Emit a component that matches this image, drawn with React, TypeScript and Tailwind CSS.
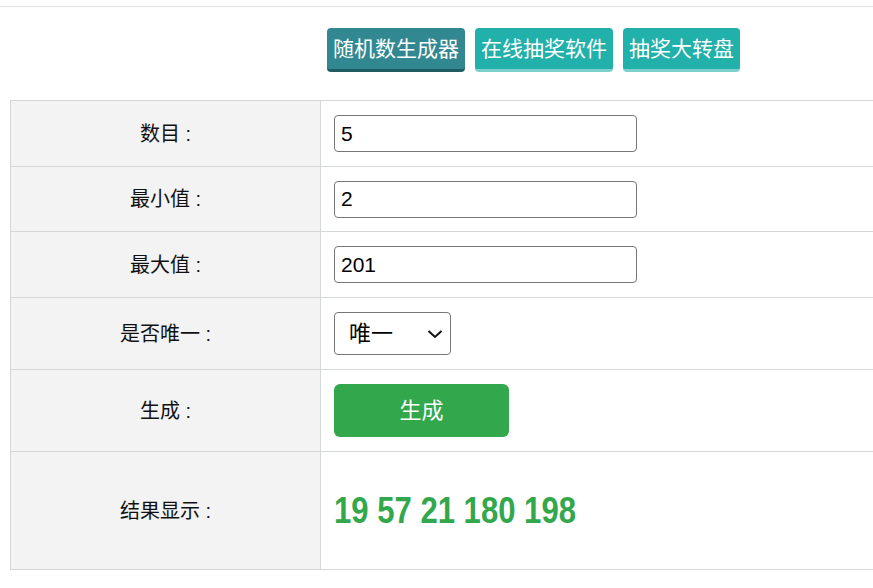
import { useState } from 'react'

const font = { fontFamily: '"Liberation Sans", Arial, "Noto Sans CJK SC", sans-serif' }

function NavButton({ label, active }: { label: string; active?: boolean }) {
  return (
    <button
      type="button"
      className={
        'h-[44px] rounded-[4px] border-b-[3px] px-[6px] text-[21px] leading-none text-white ' +
        (active ? 'border-[#1f5c63] bg-[#318891]' : 'border-[#7dd0cc] bg-[#21b0aa]')
      }
    >
      {label}
    </button>
  )
}

function Row({ label, h, children }: { label: string; h: string; children: React.ReactNode }) {
  return (
    <tr className={h}>
      <td className="w-[310px] border border-[#d4d8d4] bg-[#f3f3f3] text-center text-[20px] text-[#111]">
        {label}
      </td>
      <td className="border border-[#d4d8d4] bg-white pl-[13px]">{children}</td>
    </tr>
  )
}

export default function App() {
  const [count, setCount] = useState('5')
  const [min, setMin] = useState('2')
  const [max, setMax] = useState('201')
  const [unique, setUnique] = useState('1')
  const [result] = useState('19 57 21 180 198')

  const inputCls =
    'h-[37px] w-[303px] rounded-[4px] border border-[#767676] bg-white px-[6px] text-[21px] text-black outline-none'

  return (
    <div className="h-[588px] w-[873px] overflow-hidden bg-white" style={font}>
      <div className="h-[7px] border-b border-[#e2e2e2]" />
      <div className="flex h-[93px] gap-[10px] pl-[327px] pt-[21px]">
        <NavButton label="随机数生成器" active />
        <NavButton label="在线抽奖软件" />
        <NavButton label="抽奖大转盘" />
      </div>
      <table className="ml-[10px] w-[900px] border-collapse">
        <tbody>
          <Row label="数目 :" h="h-[66px]">
            <input className={inputCls} value={count} onChange={e => setCount(e.target.value)} />
          </Row>
          <Row label="最小值 :" h="h-[65px]">
            <input className={inputCls} value={min} onChange={e => setMin(e.target.value)} />
          </Row>
          <Row label="最大值 :" h="h-[66px]">
            <input className={inputCls} value={max} onChange={e => setMax(e.target.value)} />
          </Row>
          <Row label="是否唯一 :" h="h-[72px]">
            <div className="relative w-[117px]">
              <select
                value={unique}
                onChange={e => setUnique(e.target.value)}
                className="h-[43px] w-[117px] appearance-none rounded-[4px] border border-[#767676] bg-white pl-[14px] text-[22px] text-black outline-none"
              >
                <option value="1">唯一</option>
                <option value="0">不唯一</option>
              </select>
              <svg
                className="pointer-events-none absolute right-[8px] top-[17px]"
                width="16"
                height="10"
                viewBox="0 0 16 10"
                fill="none"
                stroke="#111"
                strokeWidth="2"
              >
                <path d="M1.5 2 8 8 14.5 2" />
              </svg>
            </div>
          </Row>
          <Row label="生成 :" h="h-[82px]">
            <button
              type="button"
              className="h-[53px] w-[175px] rounded-[6px] bg-[#32a74b] text-[22px] text-white"
            >
              生成
            </button>
          </Row>
          <Row label="结果显示 :" h="h-[118px]">
            {/* condensed bold digits */}
            <span className="inline-block origin-left scale-x-[0.84] text-[37px] font-bold text-[#32a74b]">
              {result}
            </span>
          </Row>
        </tbody>
      </table>
    </div>
  )
}
